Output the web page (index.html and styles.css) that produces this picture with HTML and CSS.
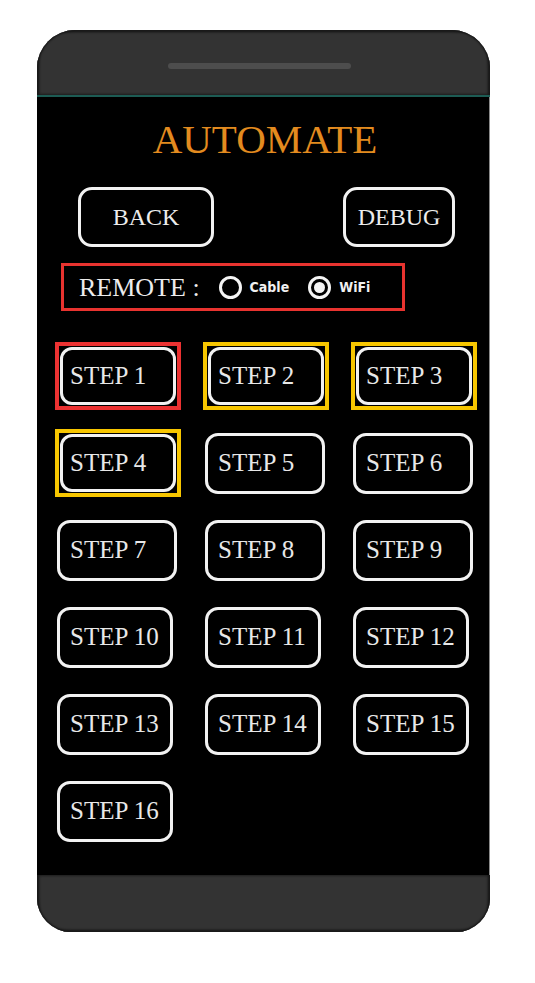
FILE: index.html
```html
<!DOCTYPE html>
<html>
<head>
<meta charset="utf-8">
<title>Automate</title>
<link rel="stylesheet" href="styles.css">
</head>
<body>
<div class="phone">
  <div class="bezel-top"><div class="speaker"></div></div>
  <div class="screen">
    <h1 class="title">AUTOMATE</h1>
    <div class="top-row">
      <div class="btn btn-back">BACK</div>
      <div class="btn btn-debug">DEBUG</div>
    </div>
    <div class="remote">
      <span class="remote-label">REMOTE :</span>
      <span class="radio radio-cable"></span>
      <span class="radio-text text-cable">Cable</span>
      <span class="radio radio-wifi checked"></span>
      <span class="radio-text">WiFi</span>
    </div>
    <div class="steps">
      <div class="mark mark-red"><div class="step inner">STEP 1</div></div>
      <div class="mark mark-yellow"><div class="step inner">STEP 2</div></div>
      <div class="mark mark-yellow"><div class="step inner">STEP 3</div></div>
      <div class="mark mark-yellow"><div class="step inner">STEP 4</div></div>
      <div class="step">STEP 5</div>
      <div class="step">STEP 6</div>
      <div class="step">STEP 7</div>
      <div class="step">STEP 8</div>
      <div class="step">STEP 9</div>
      <div class="step two">STEP 10</div>
      <div class="step two">STEP 11</div>
      <div class="step two">STEP 12</div>
      <div class="step two">STEP 13</div>
      <div class="step two">STEP 14</div>
      <div class="step two">STEP 15</div>
      <div class="step two">STEP 16</div>
    </div>
  </div>
  <div class="bezel-bottom"></div>
</div>
</body>
</html>
```
FILE: styles.css
```css
html, body {
  margin: 0;
  padding: 0;
  background: #ffffff;
}

.phone {
  margin: 30px 0 0 37px;
  width: 453px;
  height: 902px;
  border-radius: 38px 38px 34px 34px;
  overflow: hidden;
  background: #333333;
  display: flex;
  flex-direction: column;
  box-shadow: inset 0 0 2px 1px #111111;
}

.bezel-top {
  height: 65px;
  flex: none;
  border-bottom: 2px solid #1d5c54;
  box-shadow: inset 0 2px 3px #1a1a1a, inset 2px 0 3px #1a1a1a, inset -2px 0 3px #1a1a1a;
}

.speaker {
  margin: 33px 0 0 131px;
  width: 183px;
  height: 6px;
  border-radius: 3px;
  background: #4d4d4d;
}

.screen {
  flex: 1;
  background: #000000;
  border-right: 1px solid #8a8a8a;
  font-family: "Liberation Serif", "Times New Roman", serif;
  color: #ececec;
}

.title {
  margin: 0;
  padding-top: 22px;
  font-weight: normal;
  font-size: 41px;
  line-height: 41px;
  text-align: center;
  color: #e38b1f;
  padding-left: 4px;
}

.top-row {
  margin-top: 27px;
  display: flex;
  justify-content: space-between;
  padding: 0 34px 0 41px;
}

.btn {
  box-sizing: border-box;
  height: 60px;
  border: 3px solid #f2f2f2;
  border-radius: 14px;
  display: flex;
  align-items: center;
  justify-content: center;
  font-size: 24px;
}

.btn-back { width: 136px; }
.btn-debug { width: 112px; }

.remote {
  box-sizing: border-box;
  margin: 16px 0 0 24px;
  width: 344px;
  height: 48px;
  border: 3px solid #e8332f;
  display: flex;
  align-items: center;
  padding-left: 15px;
}

.remote-label {
  font-size: 26px;
  line-height: 30px;
  margin-top: 1px;
}

.radio {
  box-sizing: border-box;
  width: 23px;
  height: 23px;
  border: 3px solid #f4f4f4;
  border-radius: 50%;
  display: flex;
  align-items: center;
  justify-content: center;
  flex: none;
}

.radio-cable { margin-left: 19px; }
.radio-wifi { margin-left: 19px; }

.radio.checked::after {
  content: "";
  width: 11px;
  height: 11px;
  border-radius: 50%;
  background: #f4f4f4;
}

.radio-text {
  font-family: "DejaVu Sans Condensed", "DejaVu Sans", sans-serif;
  font-weight: bold;
  font-size: 14px;
  margin-left: 8px;
  color: #f0f0f0;
}

.steps {
  margin-top: 31px;
  padding-left: 20px;
  display: grid;
  grid-template-columns: repeat(3, 148px);
  grid-auto-rows: 68px;
  row-gap: 19px;
  align-items: center;
  justify-items: start;
}

.step {
  box-sizing: border-box;
  width: 120px;
  height: 61px;
  border: 3px solid #f2f2f2;
  border-radius: 13px;
  padding-left: 10px;
  display: flex;
  align-items: center;
  font-size: 25px;
  color: #e8e8e8;
}

.step.two { width: 116px; }

.mark {
  box-sizing: border-box;
  width: 126px;
  height: 68px;
  margin-left: -2px;
  border: 4px solid;
  padding: 1px;
}

.mark-red { border-color: #ec3232; }
.mark-yellow { border-color: #f7c600; }

.step.inner {
  width: 116px;
  height: 58px;
  padding-left: 7px;
  border-radius: 12px;
}

.bezel-bottom {
  height: 57px;
  flex: none;
  box-shadow: inset 0 -2px 3px #1a1a1a, inset 2px 0 3px #1a1a1a, inset -2px 0 3px #1a1a1a;
}
```
